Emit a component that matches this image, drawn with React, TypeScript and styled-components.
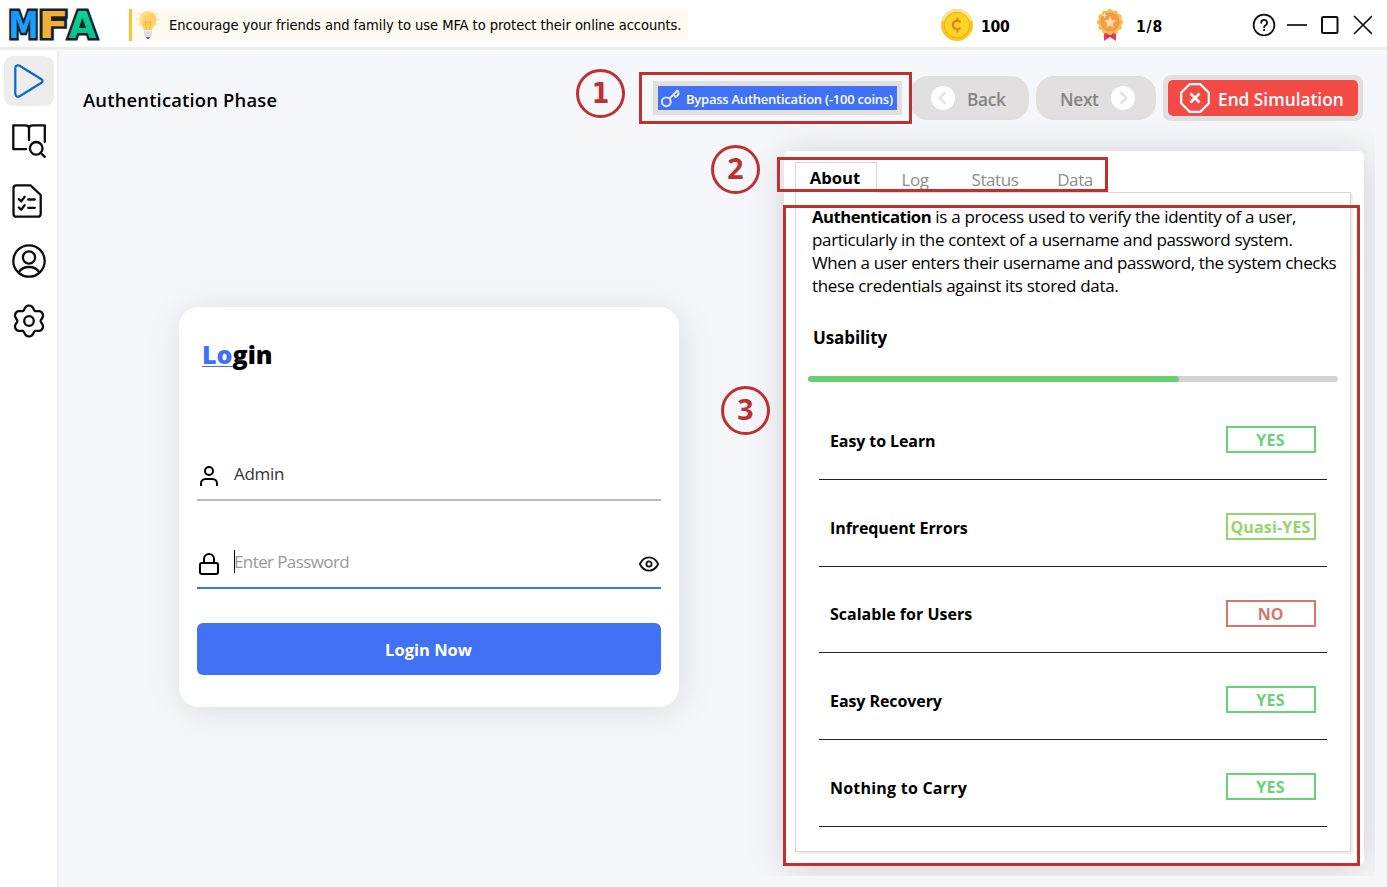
import React from 'react';
import styled, { createGlobalStyle } from 'styled-components';

const GlobalStyle = createGlobalStyle`
  * { box-sizing: border-box; }
  body {
    margin: 0;
    font-family: 'Open Sans', 'Noto Sans', sans-serif;
    color: #000;
    overflow: hidden;
  }
  svg { display: block; flex: none; }
`;

const blue = '#4171f5';
const accent = '#bf3030';
const humanist = "'DejaVu Sans Condensed', 'DejaVu Sans', sans-serif";

const Window = styled.div`
  position: relative;
  width: 1387px;
  height: 887px;
  display: flex;
  flex-direction: column;
  background: #fff;
  overflow: hidden;
`;

/* ---------- Title bar ---------- */

const TitleBar = styled.header`
  height: 51px;
  flex: none;
  display: flex;
  align-items: flex-start;
  padding: 8px 15px 0 8px;
  border-bottom: 1px solid #fff;
  box-shadow: inset 0 -3px 0 #ededed;
`;

const Tip = styled.div`
  display: flex;
  align-items: center;
  width: 559px;
  height: 32px;
  margin: 1px 0 0 29px;
  padding-left: 3px;
  background: #fdfaf1;
  border-left: 3px solid #fbc62c;
`;

const TipText = styled.span`
  margin-left: 8px;
  font-family: ${humanist};
  font-size: 14.6px;
  line-height: 18px;
  letter-spacing: -0.06px;
  white-space: nowrap;
`;

const Stat = styled.div<{ $left: number; $gap: number }>`
  display: flex;
  align-items: center;
  gap: ${p => p.$gap}px;
  height: 32px;
  margin: 1px 0 0 ${p => p.$left}px;
`;

const StatValue = styled.span<{ $spacing: number }>`
  width: 30px;
  padding-top: 4px;
  font: 700 15.6px/22px ${humanist};
  letter-spacing: ${p => p.$spacing}px;
  white-space: nowrap;
`;

const WindowControls = styled.div`
  display: flex;
  align-items: center;
  gap: 11px;
  height: 34px;
  margin-left: auto;
`;

/* ---------- Sidebar ---------- */

const Body = styled.div`
  flex: 1;
  display: flex;
  min-height: 0;
`;

const Sidebar = styled.nav`
  width: 59px;
  flex: none;
  display: flex;
  flex-direction: column;
  gap: 10px;
  padding: 5px 0 0 4px;
  border-right: 2px solid #ededed;
`;

const NavButton = styled.button<{ $active?: boolean }>`
  display: flex;
  align-items: center;
  justify-content: center;
  width: 50px;
  height: 50px;
  padding: 0;
  border: 0;
  border-radius: 9px;
  background: ${p => (p.$active ? '#ededed' : 'transparent')};
`;

/* ---------- Main area ---------- */

const Main = styled.main`
  flex: 1;
  display: flex;
  flex-direction: column;
  background: #f5f7fb;
`;

const Toolbar = styled.div`
  display: flex;
  align-items: center;
  height: 70px;
  padding: 24px 24px 0;
`;

const PageTitle = styled.h1`
  margin: 4px auto 0 0;
  font-size: 18.4px;
  line-height: 24px;
  font-weight: 600;
  letter-spacing: 0.18px;
`;

const BypassButton = styled.button`
  display: flex;
  align-items: center;
  width: 249px;
  height: 34px;
  margin-right: 8px;
  padding: 0 0 0 3px;
  border: 5px solid #e1dfe0;
  background: ${blue};
  color: #fff;
  font: 600 13px/22px 'Open Sans', sans-serif;
  letter-spacing: -0.24px;
  white-space: nowrap;
`;

const BypassLabel = styled.span`
  margin: 1px 0 0 6px;
`;

const StepButton = styled.button<{ $width: number; $pad: number; $gap: number }>`
  display: flex;
  align-items: center;
  gap: ${p => p.$gap}px;
  width: ${p => p.$width}px;
  height: 44px;
  margin-right: 7px;
  padding: 0 0 0 ${p => p.$pad}px;
  border: 0;
  border-radius: 18px;
  background: #e1dfe0;
  color: #858585;
  font: 600 17.3px/24px 'Open Sans', sans-serif;
  letter-spacing: -0.3px;
`;

const ButtonLabel = styled.span`
  padding-top: 4px;
  white-space: nowrap;
`;

const EndFrame = styled.div`
  padding: 5px;
  border-radius: 8px;
  background: #e1dfe0;
`;

const EndButton = styled.button`
  display: flex;
  align-items: center;
  gap: 8px;
  width: 190px;
  height: 36px;
  padding: 0 0 0 12px;
  border: 0;
  border-radius: 5px;
  background: #f44a45;
  color: #fff;
  font: 600 17.3px/24px 'Open Sans', sans-serif;
`;

const Content = styled.div`
  flex: 1;
  display: flex;
  align-items: flex-start;
  justify-content: space-between;
  padding: 30px 23px 0 120px;
`;

/* ---------- Login card ---------- */

const LoginCard = styled.form`
  width: 500px;
  height: 400px;
  margin-top: 156px;
  padding: 29px 18px 0;
  border-radius: 20px;
  background: #fff;
  box-shadow: 2px 4px 36px rgba(0, 0, 0, 0.11);
`;

const LoginTitle = styled.h2`
  margin: 0 0 0 5px;
  height: 37px;
  font-size: 25px;
  line-height: 36px;
  font-weight: 800;
`;

const TitleAccent = styled.span`
  color: ${blue};
  text-decoration: underline;
  text-decoration-thickness: 1px;
  text-underline-offset: 2px;
`;

const Field = styled.div<{ $line: string; $top: number }>`
  display: flex;
  align-items: center;
  height: 52px;
  margin-top: ${p => p.$top}px;
  padding-top: 4px;
  border-bottom: 2px solid ${p => p.$line};
`;

const FieldText = styled.span<{ $placeholder?: boolean }>`
  flex: 1;
  margin: 0 0 6px 13px;
  border-left: 1px solid ${p => (p.$placeholder ? '#000' : 'transparent')};
  color: ${p => (p.$placeholder ? '#9a9a9a' : '#333')};
  font-size: 17px;
  line-height: 23px;
  letter-spacing: ${p => (p.$placeholder ? -0.6 : -0.3)}px;
  text-indent: -1px;
`;

const LoginButton = styled.button`
  display: block;
  width: 100%;
  height: 52px;
  margin-top: 34px;
  padding: 2px 1px 0 0;
  border: 0;
  border-radius: 6px;
  background: ${blue};
  color: #fff;
  font: 700 16.5px/24px 'Open Sans', sans-serif;
`;

/* ---------- Info panel ---------- */

const Panel = styled.section`
  width: 580px;
  height: 714px;
  padding: 11px 11px 0;
  border-radius: 5px;
  background: #fff;
  box-shadow: 1px 3px 38px rgba(0, 0, 0, 0.16);
  clip-path: inset(-40px -11px -11px -50px);
`;

const Tabs = styled.div`
  display: flex;
  height: 30px;
`;

const Tab = styled.div<{ $width: number; $active?: boolean }>`
  width: ${p => p.$width}px;
  height: ${p => (p.$active ? 31 : 30)}px;
  padding: ${p => (p.$active ? '3px 2px 0 0' : '5px 0 0')};
  z-index: 1;
  text-align: center;
  font-size: ${p => (p.$active ? 16.7 : 17)}px;
  line-height: 23px;
  font-weight: ${p => (p.$active ? 700 : 400)};
  letter-spacing: ${p => (p.$active ? 0 : -0.4)}px;
  color: ${p => (p.$active ? '#000' : '#8c8c8c')};
  border: 1px solid ${p => (p.$active ? '#d6d6d6' : 'transparent')};
  border-bottom: 0;
  background: #fff;
`;

const Pane = styled.div`
  width: 556px;
  height: 660px;
  padding: 12px 12px 0;
  border: 1px solid #d6d6d6;
  box-shadow: 2px 2px 0 #efefef;
`;

const Description = styled.p`
  margin: 0 0 0 4px;
  font-size: 17px;
  line-height: 23px;
  white-space: nowrap;

  strong { font-size: 16.7px; letter-spacing: -0.5px; }
`;

const DescriptionLine = styled.span<{ $spacing: number }>`
  display: block;
  letter-spacing: ${p => p.$spacing}px;
`;

const SectionTitle = styled.h3`
  margin: 29px 0 0 5px;
  font-size: 17px;
  line-height: 24px;
  font-weight: 700;
  letter-spacing: -0.1px;
`;

const Track = styled.div`
  height: 6px;
  margin: 26px 0 11px;
  border-radius: 3px;
  background: #d3d3d3;
`;

const Fill = styled.div`
  width: 70%;
  height: 6px;
  border-radius: 3px;
  background: #6bcf70;
`;

const Ratings = styled.ul`
  display: grid;
  grid-template-rows: 87px 87px 86px 87px 87px;
  margin: 0 11px;
  padding: 0;
  list-style: none;
`;

const Rating = styled.li`
  display: flex;
  align-items: flex-start;
  justify-content: space-between;
  padding: 33px 11px 0;
  border-bottom: 1px solid #1b222c;
`;

const RatingName = styled.span<{ $spacing: number }>`
  padding-top: 3px;
  font-size: 16px;
  line-height: 24px;
  font-weight: 700;
  letter-spacing: ${p => p.$spacing}px;

  li:nth-child(3) > & { padding-top: 2px; }
`;

const Badge = styled.span<{ $color: string; $spacing: number }>`
  width: 90px;
  height: 27px;
  padding-right: 1px;
  border: 2px solid ${p => p.$color};
  color: ${p => p.$color};
  font-size: 16px;
  line-height: 25px;
  font-weight: 700;
  letter-spacing: ${p => p.$spacing}px;
  text-align: center;
`;

/* ---------- Callouts over the interface ---------- */

const Outline = styled.div<{ $x: number; $y: number; $w: number; $h: number }>`
  position: absolute;
  z-index: 2;
  left: ${p => p.$x}px;
  top: ${p => p.$y}px;
  width: ${p => p.$w}px;
  height: ${p => p.$h}px;
  border: 3px solid ${accent};
`;

const Marker = styled.div<{ $x: number; $y: number; $humanist?: boolean }>`
  position: absolute;
  left: ${p => p.$x}px;
  top: ${p => p.$y}px;
  width: 49px;
  height: 49px;
  border: 3px solid ${accent};
  border-radius: 50%;
  color: ${accent};
  font-family: ${p => (p.$humanist ? humanist : "'Open Sans', sans-serif")};
  font-size: ${p => (p.$humanist ? 28 : 28.5)}px;
  font-weight: 700;
  line-height: ${p => (p.$humanist ? 43 : 40)}px;
  text-align: center;
`;

/* ---------- Drawings ---------- */

const LogoSvg = styled.svg`
  overflow: visible;
  font-family: 'DejaVu Sans', sans-serif;
  font-weight: 700;
  font-size: 37px;
  stroke: #16202b;
  stroke-width: 5px;
  paint-order: stroke;
`;

const Logo = () => (
  <LogoSvg width="92" height="34" viewBox="0 0 92 34">
    <defs>
      <linearGradient id="m" x1="0" y1="0" x2="0" y2="1">
        <stop offset="0" stopColor="#1e90ff" />
        <stop offset="1" stopColor="#0fb0fa" />
      </linearGradient>
      <linearGradient id="a" x1="0" y1="0" x2="0" y2="1">
        <stop offset="0" stopColor="#00e0a0" />
        <stop offset="1" stopColor="#14b482" />
      </linearGradient>
    </defs>
    <text x="0.500" y="30.200" textLength="30" lengthAdjust="spacingAndGlyphs" fill="url(#m)">M</text>
    <text x="30.500" y="30.200" textLength="30" lengthAdjust="spacingAndGlyphs" fill="#f3ae36">F</text>
    <text x="60.500" y="30.200" textLength="28" lengthAdjust="spacingAndGlyphs" fill="url(#a)">A</text>
  </LogoSvg>
);

const Bulb = () => (
  <svg width="26" height="32" viewBox="0 0 26 32" fill="none">
    <path d="M3.500 4.500l1.800 1M1 10.500h2M3.500 16.500l1.800-1M22.500 4.500l-1.800 1M25 10.500h-2M22.500 16.500l-1.800-1" stroke="#fbdc8a" strokeWidth="1.200" />
    <path d="M13 2a8.600 8.600 0 0 0-8.600 8.700c0 4.600 3.600 5.800 4.400 10.300h8.400c.8-4.500 4.400-5.700 4.400-10.300A8.600 8.600 0 0 0 13 2z" fill="#ffd166" />
    <path d="M13 2a8.600 8.600 0 0 0-8.600 8.700c0 2 .7 3.400 1.600 4.600C7 9 10 6 17.500 3.400A8.600 8.600 0 0 0 13 2z" fill="#ffdf85" />
    <path d="M11.300 20.500l-1-8 1.700 1.200 1-1.200 1 1.200 1.700-1.200-1 8" stroke="#f5ac3c" strokeWidth="0.900" />
    <path d="M9 21.500h8v5l-2 2h-4l-2-2z" fill="#e3e5ec" />
    <path d="M9 24h8M9.500 26.500h7" stroke="#c9cdd9" strokeWidth="0.800" />
    <path d="M11 28h4l-1 2h-2z" fill="#6c5ba8" />
  </svg>
);

const Coin = () => (
  <svg width="32" height="32" viewBox="0 0 32 32" fill="none">
    <circle cx="16" cy="16" r="16" fill="#fcc61f" />
    <path d="M0.500 12A16 16 0 0 1 31.500 12z" fill="#fde28c" />
    <circle cx="16" cy="16" r="12.800" fill="#fdd327" stroke="#eeb112" strokeWidth="1" />
    <path d="M19.300 13.200a4.200 4.200 0 1 0 0 5.600" stroke="#d8890f" strokeWidth="2.400" />
    <path d="M16.500 8.600v3.200M16.500 20.200v3.200" stroke="#d8890f" strokeWidth="1.900" />
  </svg>
);

const Medal = () => (
  <svg width="26" height="32" viewBox="0 0 26 32" fill="none">
    <path d="M7 22h12v10l-6-4-6 4z" fill="#ee3a67" />
    <path d="M10 24h6v5l-3-2-3 2z" fill="#d42c5a" />
    <g fill="#f8bd46">
      <circle cx="13" cy="13" r="11.600" />
      {Array.from({ length: 12 }, (_, i) => {
        const t = (i * Math.PI) / 6;
        return <circle key={i} cx={13 + 10.4 * Math.cos(t)} cy={13 + 10.4 * Math.sin(t)} r="2.600" />;
      })}
    </g>
    <circle cx="13" cy="13" r="9" fill="#f79a55" stroke="#ef8746" strokeWidth="0.800" />
    <path d="M13 7.200l1.800 3.700 4 .6-2.900 2.900.7 4-3.600-1.900-3.600 1.900.7-4-2.900-2.900 4-.6z" fill="#ffdd94" />
    <path d="M7.500 4.500v4M5.500 6.500h4" stroke="#fff" strokeWidth="1.100" />
  </svg>
);

const PlayIcon = () => (
  <svg width="50" height="50" viewBox="0 0 50 50" fill="none" stroke="#0a6ac6" strokeWidth="2.200">
    <path d="M11.300 12v26c0 2.400 2.500 3.300 4.300 2.200l21.800-13.400c1.600-1 1.600-2.600 0-3.600l-21.800-13.400c-1.800-1.100-4.300-.2-4.300 2.200z" />
  </svg>
);

const LineIcon = styled.svg.attrs({ width: 34, height: 34, viewBox: '0 0 34 34' })`
  fill: none;
  stroke: #0c0c0c;
  stroke-width: 2.3;
  stroke-linecap: round;
  stroke-linejoin: round;
`;

const KeyIcon = () => (
  <svg width="19" height="19" viewBox="0 0 19 19" fill="none" stroke="#e8eeff" strokeWidth="1.900" strokeLinejoin="round">
    <circle cx="5.300" cy="12.800" r="4.400" />
    <path d="M8.500 9.500L16.800 1.200" />
    <path d="M12.400 5.800l2.300 2.300 2.900-2.900-.6-3.800" />
  </svg>
);

const Chevron = ({ next }: { next?: boolean }) => (
  <svg width="24" height="24" viewBox="0 0 24 24" fill="none">
    <circle cx="12" cy="12" r="12" fill="#fff" />
    <path
      d={next ? 'M10.200 6.800l5.200 5.200-5.200 5.200' : 'M13.800 6.800L8.600 12l5.200 5.200'}
      stroke="#e1dfe0"
      strokeWidth="2.200"
      strokeLinecap="round"
    />
  </svg>
);

const StopIcon = () => (
  <svg width="30" height="30" viewBox="0 0 30 30" fill="none" stroke="#fff">
    <path d="M9.700 1.200h10.600l8.500 8.500v10.600l-8.500 8.500H9.700l-8.500-8.500V9.700z" strokeWidth="2.200" />
    <path d="M10.500 10.500l9 9M19.500 10.500l-9 9" strokeWidth="2.600" />
  </svg>
);

/* Six rounded teeth around the hub, as a radius that rises and falls with the angle. */
const gearPath =
  Array.from({ length: 120 }, (_, i) => {
    const t = (i * Math.PI) / 60;
    const r = 13.8 + 1.9 * Math.cos(6 * t) - 0.25 * Math.cos(12 * t);
    const x = 17 + r * Math.sin(t);
    const y = 17 - r * Math.cos(t);
    return `${i ? 'L' : 'M'}${x.toFixed(2)} ${y.toFixed(2)}`;
  }).join('') + 'Z';

const ratings = [
  { name: 'Easy to Learn', value: 'YES', color: '#68d277', badgeSpacing: 0.3, spacing: -0.1 },
  { name: 'Infrequent Errors', value: 'Quasi-YES', color: '#95d56c', badgeSpacing: 0.15, spacing: -0.08 },
  { name: 'Scalable for Users', value: 'NO', color: '#d3786d', badgeSpacing: 0, spacing: 0 },
  { name: 'Easy Recovery', value: 'YES', color: '#68d277', badgeSpacing: 0.3, spacing: -0.08 },
  { name: 'Nothing to Carry', value: 'YES', color: '#68d277', badgeSpacing: 0.3, spacing: 0.22 },
];

export default function App() {
  return (
    <Window>
      <GlobalStyle />
      <TitleBar>
        <Logo />
        <Tip>
          <Bulb />
          <TipText>Encourage your friends and family to use MFA to protect their online accounts.</TipText>
        </Tip>
        <Stat $left={253} $gap={8}>
          <Coin />
          <StatValue $spacing={-0.3}>100</StatValue>
        </Stat>
        <Stat $left={86} $gap={13}>
          <Medal />
          <StatValue $spacing={0.8}>1/8</StatValue>
        </Stat>
        <WindowControls>
          <svg width="24" height="24" viewBox="0 0 24 24" fill="none" stroke="#111" strokeWidth="1.800" strokeLinecap="round">
            <circle cx="12" cy="12" r="10.400" />
            <path d="M9.200 9.800a2.900 2.900 0 1 1 4.400 2.400c-1 .6-1.500 1-1.500 2" />
            <circle cx="12.100" cy="17" r="0.500" fill="#111" strokeWidth="1.200" />
          </svg>
          <svg width="20" height="20" viewBox="0 0 20 20" stroke="#111" strokeWidth="1.700">
            <path d="M0 10h20" />
          </svg>
          <svg width="23" height="20" viewBox="0 0 23 20" fill="none" stroke="#111" strokeWidth="2">
            <rect x="4" y="2" width="15.500" height="16" rx="1.200" />
          </svg>
          <svg width="20" height="20" viewBox="0 0 20 20" stroke="#111" strokeWidth="1.700">
            <path d="M2 1l18 18M20 1L2 19" />
          </svg>
        </WindowControls>
      </TitleBar>

      <Body>
        <Sidebar>
          <NavButton $active>
            <PlayIcon />
          </NavButton>
          <NavButton>
            <LineIcon>
              <path d="M14 25.200H1.300V1.300H13q4 0 4 3.200V16M17 4.500q0-3.200 4-3.200h11.800V18" />
              <circle cx="24.200" cy="24.300" r="6.300" />
              <path d="M28.800 29l4 3.800" />
            </LineIcon>
          </NavButton>
          <NavButton>
            <LineIcon>
              <path d="M4.300 1.300H18.500L28.700 11v18.700q0 3-3 3H4.300q-2.800 0-2.800-3V4.300q0-3 2.800-3z" />
              <path d="M6.800 15.200l2.400 2.200 3.500-4.600M6.800 23.500l2.400 2.200 3.500-4.600M16.200 15.500h6.600M16.200 23.800h6.600" />
            </LineIcon>
          </NavButton>
          <NavButton>
            <LineIcon>
              <circle cx="17" cy="17" r="15.700" />
              <circle cx="17" cy="13.500" r="6.100" />
              <path d="M6.700 28.300c2.300-3.700 6-5.300 10.300-5.300s8 1.600 10.300 5.300" />
            </LineIcon>
          </NavButton>
          <NavButton>
            <LineIcon>
              <path d={gearPath} />
              <circle cx="17" cy="17" r="4.800" />
            </LineIcon>
          </NavButton>
        </Sidebar>

        <Main>
          <Toolbar>
            <PageTitle>Authentication Phase</PageTitle>
            <BypassButton>
              <KeyIcon />
              <BypassLabel>Bypass Authentication (-100 coins)</BypassLabel>
            </BypassButton>
            <StepButton $width={119} $pad={21} $gap={12}>
              <Chevron />
              <ButtonLabel>Back</ButtonLabel>
            </StepButton>
            <StepButton $width={120} $pad={24} $gap={12}>
              <ButtonLabel>Next</ButtonLabel>
              <Chevron next />
            </StepButton>
            <EndFrame>
              <EndButton>
                <StopIcon />
                <ButtonLabel>End Simulation</ButtonLabel>
              </EndButton>
            </EndFrame>
          </Toolbar>

          <Content>
            <LoginCard>
              <LoginTitle>
                <TitleAccent>Lo</TitleAccent>gin
              </LoginTitle>
              <Field $line="#bababa" $top={76}>
                <svg width="24" height="24" viewBox="0 0 24 24" fill="none" stroke="#000" strokeWidth="2">
                  <circle cx="12" cy="7" r="4" />
                  <path d="M4 22v-2.500A4.500 4.500 0 0 1 8.500 15h7a4.500 4.500 0 0 1 4.500 4.500V22" />
                </svg>
                <FieldText>Admin</FieldText>
              </Field>
              <Field $line={blue} $top={36}>
                <svg width="24" height="24" viewBox="0 0 24 24" fill="none" stroke="#000" strokeWidth="2">
                  <rect x="3" y="11" width="18" height="11" rx="2" />
                  <path d="M7 11V7a5 5 0 0 1 10 0v4" />
                </svg>
                <FieldText $placeholder>Enter Password</FieldText>
                <svg width="24" height="24" viewBox="0 0 24 24" fill="none" stroke="#111" strokeWidth="1.800">
                  <path d="M2.800 12C5 7.500 8.300 5.400 12 5.400S19 7.500 21.200 12C19 16.500 15.700 18.600 12 18.600S5 16.500 2.800 12z" />
                  <circle cx="12" cy="12" r="2.600" />
                </svg>
              </Field>
              <LoginButton type="button">Login Now</LoginButton>
            </LoginCard>

            <Panel>
              <Tabs>
                <Tab $width={82} $active>About</Tab>
                <Tab $width={76}>Log</Tab>
                <Tab $width={84}>Status</Tab>
                <Tab $width={76}>Data</Tab>
              </Tabs>
              <Pane>
                <Description>
                  <DescriptionLine $spacing={-0.3}>
                    <strong>Authentication</strong> is a process used to verify the identity of a user,
                  </DescriptionLine>
                  <DescriptionLine $spacing={-0.35}>
                    particularly in the context of a username and password system.
                  </DescriptionLine>
                  <DescriptionLine $spacing={-0.39}>
                    When a user enters their username and password, the system checks
                  </DescriptionLine>
                  <DescriptionLine $spacing={-0.31}>these credentials against its stored data.</DescriptionLine>
                </Description>
                <SectionTitle>Usability</SectionTitle>
                <Track>
                  <Fill />
                </Track>
                <Ratings>
                  {ratings.map(r => (
                    <Rating key={r.name}>
                      <RatingName $spacing={r.spacing}>{r.name}</RatingName>
                      <Badge $color={r.color} $spacing={r.badgeSpacing}>{r.value}</Badge>
                    </Rating>
                  ))}
                </Ratings>
              </Pane>
            </Panel>
          </Content>
        </Main>
      </Body>

      <Outline $x={639} $y={72} $w={273} $h={52} />
      <Outline $x={777} $y={157} $w={331} $h={35} />
      <Outline $x={783} $y={205} $w={577} $h={661} />
      <Marker $x={576} $y={69} $humanist>1</Marker>
      <Marker $x={711} $y={145}>2</Marker>
      <Marker $x={721} $y={386}>3</Marker>
    </Window>
  );
}
